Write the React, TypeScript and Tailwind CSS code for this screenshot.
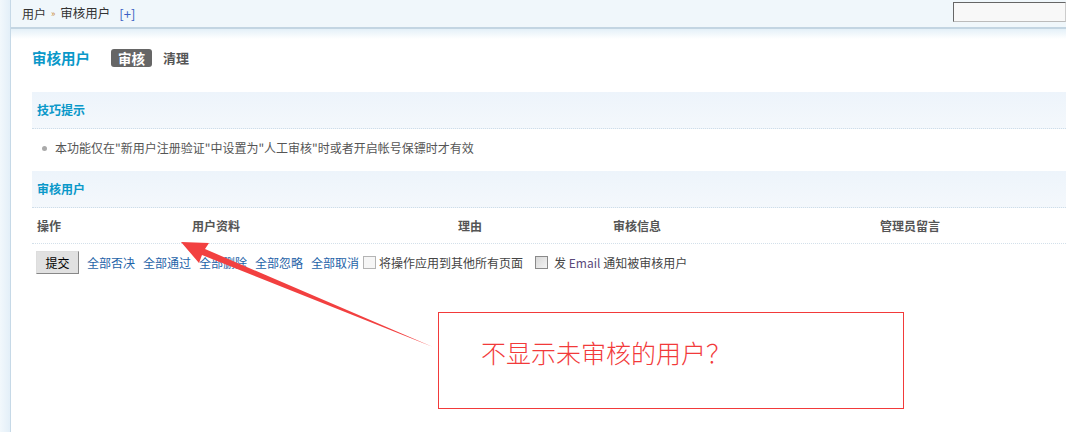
import React from "react";

const font = { fontFamily: '"Noto Sans CJK SC", "Liberation Sans", sans-serif' };

export default function App() {
  const links = ["全部否决", "全部通过", "全部删除", "全部忽略", "全部取消"];

  return (
    <div className="relative h-[432px] w-[1066px] overflow-hidden bg-white text-[12px] text-[#555]" style={font}>
      <div className="flex h-full">
        {/* left strip */}
        <div className="w-[11px] shrink-0 border-r border-[#c6d9e7] bg-gradient-to-r from-[#f2f8fc] to-[#e3eff8]" />

        <div className="flex min-w-0 flex-1 flex-col">
          {/* top bar */}
          <div className="flex h-[29px] items-center justify-between border-b-2 border-[#c3d5e2] bg-[#f0f7fb] pl-[11px]">
            <div className="flex items-center text-[#333]">
              <span>用户</span>
              <span className="mx-[5px] text-[9px] text-[#c98a3c]">»</span>
              <span className="text-[12.5px]">审核用户</span>
              <span className="ml-[9px] text-[13px] text-[#3a5fc4]">[+]</span>
            </div>
            <div className="mb-[4px] h-[20px] w-[113px] border border-t-[#666] border-l-[#666] border-r-[#ccc] border-b-[#bbb] bg-[#f8f8f8]" />
          </div>
          <div className="h-[10px] bg-gradient-to-b from-[#e4f0f8] to-white" />

          <div className="pl-[21px]">
            {/* title row */}
            <div className="mt-[9px] flex h-[20px] items-center">
              <span className="w-[79px] text-[14.5px] font-bold text-[#0a98c9]">审核用户</span>
              <span className="rounded-[3px] bg-[#666] px-[7px] py-[1px] text-[13.5px] font-bold leading-[16px] text-white">审核</span>
              <span className="ml-[11px] text-[13px] font-bold text-[#555]">清理</span>
            </div>

            {/* tips section */}
            <div className="mt-[24px] flex h-[37px] items-center border-b border-dotted border-[#cfdde8] bg-gradient-to-b from-[#edf4fb] to-[#f4f8fc] pl-[5px]">
              <span className="font-bold text-[#0a98c9]">技巧提示</span>
            </div>
            <div className="flex h-[38px] items-center pl-[10px]">
              <span className="mr-[8px] inline-block h-[5px] w-[5px] rounded-full bg-[#aaa]" />
              <span>本功能仅在"新用户注册验证"中设置为"人工审核"时或者开启帐号保镖时才有效</span>
            </div>

            <div className="mt-[4px] flex h-[37px] items-center border-b border-dotted border-[#cfdde8] bg-gradient-to-b from-[#edf4fb] to-[#f4f8fc] pl-[5px]">
              <span className="font-bold text-[#0a98c9]">审核用户</span>
            </div>

            {/* table head */}
            <div className="grid h-[36px] grid-cols-[155px_266px_155px_267px_1fr] items-center border-b border-dotted border-[#d3e0ea] pl-[5px] font-bold text-[#555]">
              <span>操作</span>
              <span>用户资料</span>
              <span>理由</span>
              <span>审核信息</span>
              <span>管理员留言</span>
            </div>

            {/* actions */}
            <div className="mt-[7px] flex items-center pl-[4px]">
              <button className="h-[23px] w-[43px] border border-[#888] border-t-[#ddd] border-l-[#ddd] bg-[#e1e1e1] text-[12px] text-black">提交</button>
              <div className="ml-[8px] flex gap-[8px]">
                {links.map((l) => (
                  <span key={l} className="text-[#1e63a8]">{l}</span>
                ))}
              </div>
              <span className="ml-[4px] mr-[3px] inline-block h-[13px] w-[13px] border border-[#b4b4b4] bg-[#f6f6f6]" />
              <span className="text-[#444]">将操作应用到其他所有页面</span>
              <span className="ml-[12px] mr-[6px] inline-block h-[13px] w-[13px] border border-[#8a8a8a] bg-gradient-to-br from-[#d8d8d8] to-[#f4f4f4]" />
              <span className="text-[#444]">发 <span className="text-[#5a4a7a]">Email</span> 通知被审核用户</span>
            </div>
          </div>
        </div>
      </div>

      {/* annotation */}
      <div className="absolute left-[438px] top-[312px] flex h-[97px] w-[466px] items-start border border-[#f23a3a] bg-white pl-[42px] pt-[23px]">
        <span className="text-[25px] font-light leading-[32px] text-[#f23a3a]" style={{ fontFamily: '"Noto Sans CJK SC", serif' }}>不显示未审核的用户？</span>
      </div>
      <svg className="absolute left-0 top-0" width="1066" height="432" viewBox="0 0 1066 432">
        <polygon points="181,242 209,243 205,249 433,347 202,255 199,263" fill="#f24040" />
      </svg>
    </div>
  );
}
